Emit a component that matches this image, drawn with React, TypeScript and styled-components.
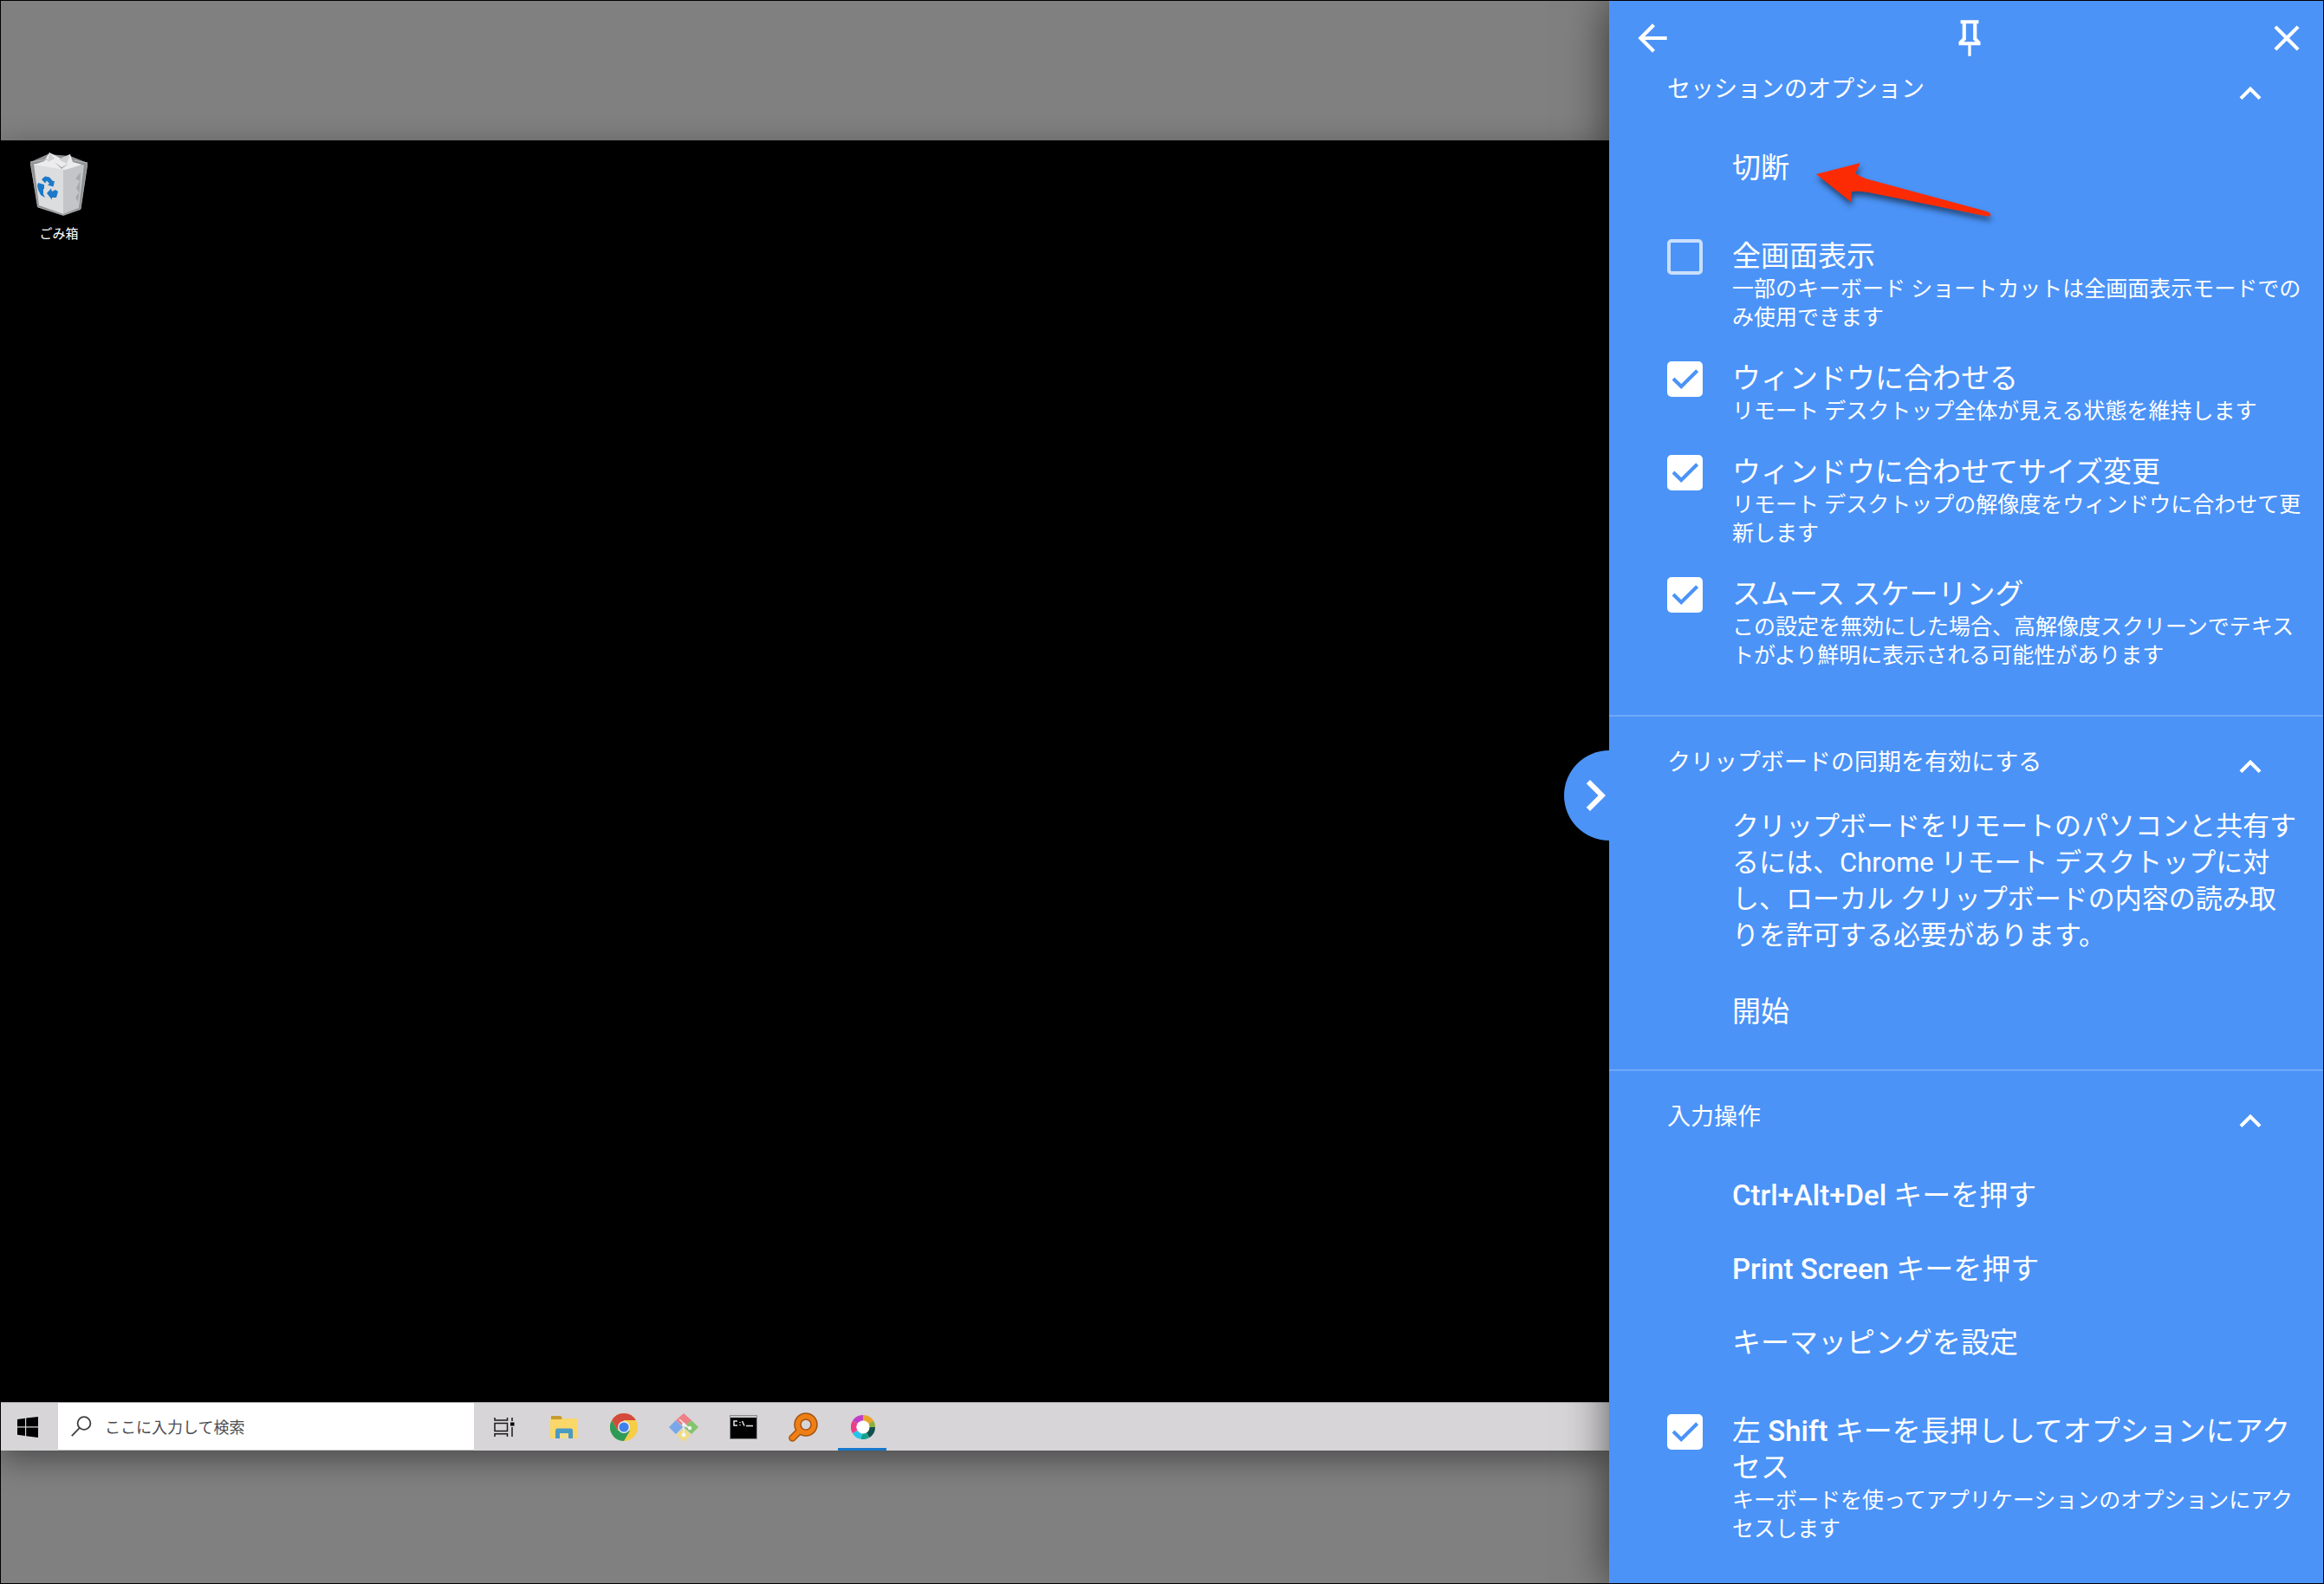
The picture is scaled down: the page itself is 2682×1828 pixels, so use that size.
import React, { useId, useState } from "react";
import styled, { createGlobalStyle } from "styled-components";

const accent = "#4b93f7";
const uiFont = `Roboto, "Noto Sans CJK JP", sans-serif`;
const remoteFont = `"Noto Sans CJK JP", sans-serif`;

const GlobalStyle = createGlobalStyle`
  *, *::before, *::after { box-sizing: border-box; }
  body { margin: 0; background: #000; font-family: ${uiFont}; }
  button, input { font: inherit; color: inherit; }
  h2, p, ul { margin: 0; padding: 0; font-weight: 400; }
`;

const Window = styled.main`
  display: flex;
  min-height: 100vh;
  border: 1px solid #000;
  overflow: hidden;
`;

/* ---------- remote desktop ---------- */

const Viewport = styled.section`
  flex: 1;
  min-width: 0;
  display: flex;
  flex-direction: column;
  padding: 161px 0 153px;
  background: #808080;
  overflow: hidden;
`;

const RemoteScreen = styled.div`
  flex: 1;
  display: flex;
  flex-direction: column;
  background: #000;
  box-shadow: 0 10px 34px rgba(0, 0, 0, 0.42);
`;

const Wallpaper = styled.div`
  flex: 1;
  padding: 13px 24px;
`;

const DesktopIcon = styled.button`
  display: flex;
  flex-direction: column;
  align-items: center;
  gap: 9px;
  width: 86px;
  padding: 0;
  border: 0;
  background: none;
  color: #fff;
  font-family: ${remoteFont};
  font-size: 15px;
  line-height: 22px;
`;

const Taskbar = styled.nav`
  display: flex;
  align-items: stretch;
  height: 56px;
  background: #d7d5d8;
  border-top: 1px solid #a9a8aa;
`;

const StartButton = styled.button`
  display: flex;
  align-items: center;
  justify-content: center;
  width: 66px;
  padding: 0 4px 0 0;
  border: 0;
  background: none;
`;

const SearchBox = styled.label`
  display: flex;
  align-items: center;
  gap: 15px;
  width: 480px;
  padding: 0 15px;
  background: #fff;
  border-bottom: 1px solid #c4c4c6;
`;

const SearchInput = styled.input`
  flex: 1;
  min-width: 0;
  padding: 0;
  border: 0;
  outline: 0;
  background: none;
  font-family: ${remoteFont};
  font-size: 18px;
  color: #333;
  &::placeholder { color: #4c4c50; opacity: 1; }
`;

const TaskButton = styled.button<{ $active?: boolean }>`
  position: relative;
  display: flex;
  align-items: center;
  justify-content: center;
  width: 69px;
  padding: 0;
  border: 0;
  background: none;
  &::after {
    content: "";
    display: ${(p) => (p.$active ? "block" : "none")};
    position: absolute;
    left: 6px;
    right: 7px;
    bottom: 0;
    height: 3px;
    background: #1778cc;
  }
`;

/* ---------- options panel ---------- */

const Panel = styled.aside`
  position: relative;
  flex: 0 0 824px;
  background: ${accent};
  color: #fff;
  box-shadow: 0 0 48px rgba(0, 0, 0, 0.6);
`;

const Handle = styled.button`
  position: absolute;
  top: 865px;
  left: -52px;
  display: flex;
  align-items: center;
  width: 52px;
  height: 104px;
  padding: 0;
  border: 0;
  border-radius: 52px 0 0 52px;
  background: ${accent};
  svg { flex: none; }
`;

const PanelBar = styled.header`
  display: flex;
  justify-content: space-between;
  padding: 18px 17px 14px 25px;
`;

const IconButton = styled.button`
  display: flex;
  padding: 0;
  border: 0;
  background: none;
`;

const Section = styled.section`
  padding: 0 24px 24px 67px;
  & + & {
    padding-top: 33px;
    border-top: 2px solid #6fa9f9;
  }
  &:last-child { padding-bottom: 0; }
`;

const SectionHead = styled.div`
  display: flex;
  justify-content: space-between;
  align-items: flex-start;
  margin-bottom: 18px;
  padding-right: 35px;
`;

const SectionTitle = styled.h2`
  font-size: 27px;
  line-height: 40px;
`;

const Actions = styled.div`
  display: flex;
  flex-direction: column;
  padding-left: 75px;
`;

const Action = styled.button`
  position: relative;
  height: 85px;
  padding: 0;
  border: 0;
  background: none;
  text-align: left;
  font-size: 33px;
  line-height: 42px;
`;

const Pointer = styled.svg`
  position: absolute;
  top: 33px;
  left: 91px;
  overflow: visible;
  filter: drop-shadow(1px 5px 3px rgba(0, 0, 0, 0.5));
`;

const Note = styled.p`
  padding: 5px 0 24px 75px;
  font-size: 31px;
  line-height: 42px;
`;

const Options = styled.div`
  display: flex;
  flex-direction: column;
  gap: 33px;
  padding: 39px 0 28px;
`;

const Option = styled.div`
  display: flex;
  gap: 34px;
`;

const Check = styled.span`
  flex: none;
  display: grid;
  align-self: flex-start;
  padding-top: 1px;
  > * { grid-area: 1 / 1; }
  svg { pointer-events: none; z-index: 1; }
`;

const CheckInput = styled.input`
  appearance: none;
  width: 41px;
  height: 41px;
  margin: 0;
  border: 4px solid rgba(255, 255, 255, 0.7);
  border-radius: 5px;
  &:checked {
    border-color: #fff;
    background: #fff;
  }
`;

const OptionLabel = styled.label`
  display: block;
  font-size: 33px;
  line-height: 42px;
`;

const OptionHint = styled.p`
  font-size: 25px;
  line-height: 33px;
`;

const KeyName = styled.span`
  font-weight: 500;
`;

/* ---------- icons ---------- */

const Glyph = ({ d, size = 50 }: { d: string; size?: number }) => (
  <svg width={size} height={size} viewBox="0 0 24 24" fill="#fff" aria-hidden="true">
    <path d={d} />
  </svg>
);

const glyphs = {
  back: "M20 11H7.83l5.59-5.59L12 4l-8 8 8 8 1.41-1.41L7.83 13H20v-2z",
  pin: "M16,12V4H17V2H7V4H8V12L6,14V16H11.2V22H12.8V16H18V14L16,12M8.8,14L10,12.8V4H14V12.8L15.2,14H8.8Z",
  close: "M19 6.41L17.59 5 12 10.59 6.41 5 5 6.41 10.59 12 5 17.59 6.41 19 12 13.41 17.59 19 19 17.59 13.41 12z",
  up: "M12 8l-6 6 1.41 1.41L12 10.83l4.59 4.58L18 14z",
  right: "M10 6L8.59 7.41 13.17 12l-4.58 4.59L10 18l6-6z",
};

const RecycleBin = () => (
  <svg width="66" height="74" viewBox="0 0 66 74" aria-hidden="true">
    <path d="M0 12L20 3 46 5 66 13 58 67 38 74 8 64Z" fill="#8f9193" />
    <path d="M4 14L38 19 38 72 10 62Z" fill="#dcdddf" />
    <path d="M38 19L62 15 56 65 38 72Z" fill="#c3c5c8" />
    <path d="M4 15L16 11 22 1 28 4 35 8 46 3 49 12 60 15 40 21 22 18Z" fill="#ececee" />
    <path d="M22 1L28 8 20 12ZM46 3L42 14 33 9Z" fill="#cfd0d2" />
    <path d="M28 12L36 20 44 14 36 18Z" fill="#a9abad" />
    <path d="M58 24L52 31 57 34 53 42 56 47 52 53 55 58 57 44Z" fill="#a7aaad" />
    <path d="M0 12L20 9 M66 13L50 10" stroke="#b9bbbd" fill="none" />
    <path d="M0 12L9 64 38 73 58 66 66 13" fill="none" stroke="#a6a8aa" />
    <g fill="#1c79c9">
      <path d="M13 32L17 28.500 22 29.500 26 34 28 34 26.500 40.500 20 38.500 22 37 19 33.500 17 36.500Z" />
      <path d="M9 36L16 38 16 43 15 43 15 49 17 53 12 50 9 44 8 39Z" />
      <path d="M19 48L24 42.500 25 46 29 44 32 46 30 53 25 53 25 55.500Z" />
    </g>
  </svg>
);

const WindowsLogo = () => (
  <svg width="24" height="24" viewBox="0 0 24 24" fill="#000" aria-hidden="true">
    <path d="M0 3L9 1.7V11.2H0ZM10.2 1.5L24 0V11.2H10.2ZM0 12.4H9V22L0 20.7ZM10.2 12.4H24V24L10.2 22.3Z" />
  </svg>
);

const SearchGlyph = () => (
  <svg width="24" height="24" viewBox="0 0 24 24" fill="none" stroke="#3f3f42" strokeWidth="1.8" aria-hidden="true">
    <circle cx="15" cy="8.5" r="7.4" />
    <path d="M9.8 13.8L.8 23.2" />
  </svg>
);

const TaskView = () => (
  <svg width="24" height="24" viewBox="0 0 24 24" fill="none" stroke="#1a1a1a" strokeWidth="1.5" aria-hidden="true">
    <path d="M1 1V4H15.500V1M1 7.500H15.500V16.500H1ZM1 23V19.800H15.500V23M21 1V5M21 12V23" />
    <rect x="19" y="6.500" width="4.500" height="4" fill="#000" stroke="none" />
  </svg>
);

const Explorer = () => (
  <svg width="32" height="28" viewBox="0 0 32 28" aria-hidden="true">
    <path d="M0 4H31V27H0Z" fill="#f9d768" />
    <path d="M1 1H12L14 4 12 5H1Z" fill="#c79b2d" />
    <path d="M6 18Q6 15.500 8 15.500H24Q26 15.500 26 18V27H21V21H11V27H6Z" fill="#4a9ac6" />
    <path d="M11 21H21V27H11Z" fill="#f3dd88" />
  </svg>
);

const Chrome = () => (
  <svg width="32" height="32" viewBox="0 0 32 32" aria-hidden="true">
    <circle cx="16" cy="16" r="16" fill="#f7cd45" />
    <path d="M2.140 8A16 16 0 0 0 16 32L23 20 9 20Z" fill="#2f9a58" />
    <path d="M2.140 8A16 16 0 0 1 29.860 8H16L9 20Z" fill="#d34a3c" />
    <circle cx="16" cy="16" r="7" fill="#e8eef4" />
    <circle cx="16" cy="16" r="5.600" fill="#3f80ea" />
  </svg>
);

const GitTiles = () => (
  <svg width="34" height="34" viewBox="0 0 34 34" aria-hidden="true">
    <path d="M17 1L26 9 17 17 8 9Z" fill="#ee7f86" />
    <path d="M8 9L16 17 8 25 0 17Z" fill="#79a7ea" />
    <path d="M26 9L34 17 26 25 17 17Z" fill="#84c46c" />
    <path d="M17 18L25 26 17 34 9 26Z" fill="#f1dc7e" />
    <path d="M12 8L21 16M17 12V26M17 15L24 18" stroke="#e9eeee" strokeWidth="1.5" />
    <g fill="#f3f5f5">
      <circle cx="17" cy="26" r="2.500" />
      <circle cx="24" cy="18" r="2.200" />
      <circle cx="17" cy="14" r="2" />
    </g>
  </svg>
);

const Terminal = () => (
  <svg width="32" height="28" viewBox="0 0 32 28" aria-hidden="true">
    <path d="M.5 .5H31.500V27.500H.5Z" fill="#000" stroke="#8b8b8d" />
    <path d="M1 1H31V3H1Z" fill="#c9c9cb" />
    <path d="M9 7H5V12H9M12 8V9M12 11V12M14.500 7L17 12.500M19 12.500H27" stroke="#e6e6e6" strokeWidth="1.500" fill="none" />
  </svg>
);

const Magnifier = () => (
  <svg width="34" height="34" viewBox="0 0 34 34" fill="none" strokeLinecap="round" aria-hidden="true">
    <g stroke="#a5530f" strokeWidth="8.500">
      <circle cx="20" cy="14" r="9.500" />
      <path d="M12.500 21.500L4.500 29.500" />
    </g>
    <g stroke="#ee7f16" strokeWidth="5.500">
      <circle cx="20" cy="14" r="9.500" />
      <path d="M12.500 21.500L4.500 29.500" />
    </g>
  </svg>
);

const ColorRing = () => (
  <svg width="28" height="28" viewBox="-1 -1 30 30" fill="none" strokeWidth="7" aria-hidden="true">
    <circle cx="14" cy="14" r="10" fill="#fff" stroke="none" />
    <path d="M4 8A11.500 11.500 0 0 1 14 2.500" stroke="#c23fc4" />
    <path d="M14 2.500A11.500 11.500 0 0 1 24 8" stroke="#e9a52b" />
    <path d="M24 8A11.500 11.500 0 0 1 25.500 14" stroke="#8fae3a" />
    <path d="M25.500 14A11.500 11.500 0 0 1 20 23.900" stroke="#12504f" />
    <path d="M20 23.900A11.500 11.500 0 0 1 12 25.400" stroke="#16a08c" />
    <path d="M12 25.400A11.500 11.500 0 0 1 4 19.700" stroke="#25c3ea" />
    <path d="M4 19.700A11.500 11.500 0 0 1 4 8" stroke="#ea3f86" />
  </svg>
);

const RedArrow = () => (
  <Pointer width="210" height="70" viewBox="0 0 210 70" aria-hidden="true">
    <path d="M6 17L57 4 51 16Q58 21 70 24L203 60Q208 62 207 65 205 66 200 65L66 38Q54 36 47 37L46 49Z" fill="#fd2b04" />
  </Pointer>
);

/* ---------- parts ---------- */

function CheckOption({ label, hint, initial = true }: { label: React.ReactNode; hint: string; initial?: boolean }) {
  const id = useId();
  const [on, setOn] = useState(initial);
  return (
    <Option>
      <Check>
        <CheckInput
          id={id}
          type="checkbox"
          checked={on}
          aria-describedby={`${id}-hint`}
          onChange={(e) => setOn(e.target.checked)}
        />
        {on && (
          <svg width="41" height="41" viewBox="0 0 24 24" fill="none" stroke={accent} strokeWidth="2.4" aria-hidden="true">
            <path d="M4.100 11.700L9.500 17 20.300 6.300" />
          </svg>
        )}
      </Check>
      <div>
        <OptionLabel htmlFor={id}>{label}</OptionLabel>
        <OptionHint id={`${id}-hint`}>{hint}</OptionHint>
      </div>
    </Option>
  );
}

function PanelSection({ title, children }: { title: string; children: React.ReactNode }) {
  const [open, setOpen] = useState(true);
  return (
    <Section>
      <SectionHead>
        <SectionTitle>{title}</SectionTitle>
        <IconButton aria-label={title} aria-expanded={open} onClick={() => setOpen(!open)}>
          <Glyph d={glyphs.up} />
        </IconButton>
      </SectionHead>
      {open && children}
    </Section>
  );
}

const apps = [
  { name: "タスク ビュー", Icon: TaskView },
  { name: "エクスプローラー", Icon: Explorer },
  { name: "Google Chrome", Icon: Chrome },
  { name: "Git", Icon: GitTiles },
  { name: "コマンド プロンプト", Icon: Terminal },
  { name: "検索ツール", Icon: Magnifier },
  { name: "カラー", Icon: ColorRing, active: true },
];

export default function App() {
  return (
    <>
      <GlobalStyle />
      <Window>
        <Viewport>
          <RemoteScreen>
            <Wallpaper>
              <DesktopIcon>
                <RecycleBin />
                ごみ箱
              </DesktopIcon>
            </Wallpaper>
            <Taskbar>
              <StartButton aria-label="スタート">
                <WindowsLogo />
              </StartButton>
              <SearchBox>
                <SearchGlyph />
                <SearchInput type="text" aria-label="検索" placeholder="ここに入力して検索" />
              </SearchBox>
              {apps.map(({ name, Icon, active }) => (
                <TaskButton key={name} aria-label={name} $active={active}>
                  <Icon />
                </TaskButton>
              ))}
            </Taskbar>
          </RemoteScreen>
        </Viewport>

        <Panel>
          <Handle aria-label="パネルを閉じる">
            <Glyph d={glyphs.right} size={72} />
          </Handle>
          <PanelBar>
            <IconButton aria-label="戻る"><Glyph d={glyphs.back} /></IconButton>
            <IconButton aria-label="固定"><Glyph d={glyphs.pin} /></IconButton>
            <IconButton aria-label="閉じる"><Glyph d={glyphs.close} /></IconButton>
          </PanelBar>

          <PanelSection title="セッションのオプション">
            <Actions>
              <Action>
                切断
                <RedArrow />
              </Action>
            </Actions>
            <Options>
              <CheckOption
                initial={false}
                label="全画面表示"
                hint="一部のキーボード ショートカットは全画面表示モードでのみ使用できます"
              />
              <CheckOption
                label="ウィンドウに合わせる"
                hint="リモート デスクトップ全体が見える状態を維持します"
              />
              <CheckOption
                label="ウィンドウに合わせてサイズ変更"
                hint="リモート デスクトップの解像度をウィンドウに合わせて更新します"
              />
              <CheckOption
                label="スムース スケーリング"
                hint="この設定を無効にした場合、高解像度スクリーンでテキストがより鮮明に表示される可能性があります"
              />
            </Options>
          </PanelSection>

          <PanelSection title="クリップボードの同期を有効にする">
            <Note>
              クリップボードをリモートのパソコンと共有するには、Chrome リモート デスクトップに対し、ローカル クリップボードの内容の読み取りを許可する必要があります。
            </Note>
            <Actions>
              <Action>開始</Action>
            </Actions>
          </PanelSection>

          <PanelSection title="入力操作">
            <Actions>
              <Action><KeyName>Ctrl+Alt+Del</KeyName> キーを押す</Action>
              <Action><KeyName>Print Screen</KeyName> キーを押す</Action>
              <Action>キーマッピングを設定</Action>
            </Actions>
            <Options>
              <CheckOption
                label={<>左 <KeyName>Shift</KeyName> キーを長押ししてオプションにアク<wbr />セス</>}
                hint="キーボードを使ってアプリケーションのオプションにアクセスします"
              />
            </Options>
          </PanelSection>
        </Panel>
      </Window>
    </>
  );
}
